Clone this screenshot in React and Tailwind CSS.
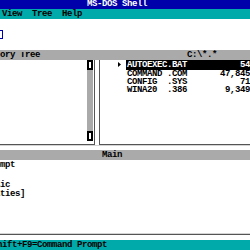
const files = [
  { name: "AUTOEXEC.BAT", size: "54" },
  { name: "COMMAND .COM", size: "47,845" },
  { name: "CONFIG  .SYS", size: "71" },
  { name: "WINA20  .386", size: "9,349" },
];

const programs = ["Command Prompt", "Editor", "MS-DOS QBasic", "[Disk Utilities]"];

function ScrollCap() {
  return (
    <div className="h-[10px] w-[6px] bg-black flex items-center justify-center">
      <div className="h-[6px] w-[2px] bg-white" />
    </div>
  );
}

export default function App() {
  return (
    <div className="w-[250px] h-[250px] overflow-hidden bg-white flex flex-col font-['Liberation_Mono',monospace] font-bold text-[9px] tracking-[-0.4px] leading-[7px] text-black whitespace-pre">
      {/* title + menu */}
      <div className="h-[9px] shrink-0 bg-[#0000aa] text-white flex items-center pl-[87px]">MS-DOS Shell</div>
      <div className="h-[10px] shrink-0 bg-[#00aaaa] flex items-center pl-[2px]">View  Tree  Help</div>

      {/* drive strip */}
      <div className="h-[31px] shrink-0 pt-[11px]">
        <div className="-ml-[3px] h-[9px] w-[6px] border border-[#0000aa]" />
      </div>

      {/* panel headers */}
      <div className="h-[10px] shrink-0 bg-[#aaaaaa] flex items-center overflow-hidden">
        <div className="w-[99px] shrink-0 overflow-hidden">
          <span className="-ml-[30px] inline-block">Directory Tree</span>
        </div>
        <div className="pl-[88px]">C:\*.*</div>
      </div>

      {/* tree + file list */}
      <div className="h-[85px] shrink-0 flex">
        <div className="w-[95px] shrink-0 border-r border-b border-[#555] flex justify-end">
          <div className="w-[6px] mr-[1px] mb-[3px] flex flex-col bg-[#aaaaaa]">
            <ScrollCap />
            <div className="flex-1" />
            <ScrollCap />
          </div>
        </div>
        <div className="w-[4px] shrink-0" />
        <div className="flex-1 border-l border-b border-[#555] flex">
          <div className="w-[26px] shrink-0 pl-[18px] pt-[2px]">
            <svg width="3" height="5" viewBox="0 0 3 5" className="block">
              <path d="M0 0 L3 2.5 L0 5 Z" fill="#000" />
            </svg>
          </div>
          <div className="flex-1 flex flex-col">
            {files.map((f, i) => (
              <div
                key={f.name}
                className={
                  i === 0
                    ? "h-[10px] bg-black text-white flex items-center justify-between pl-[1px]"
                    : "h-[8px] flex items-center justify-between pl-[1px]"
                }
              >
                <span>{f.name}</span>
                <span>{f.size}</span>
              </div>
            ))}
          </div>
        </div>
      </div>
      <div className="h-px shrink-0 bg-[#d4d4d4]" />
      <div className="h-[4px] shrink-0" />

      {/* main group */}
      <div className="h-[10px] shrink-0 bg-[#aaaaaa] flex items-center pl-[102px]">Main</div>
      <div className="h-[75px] shrink-0 flex flex-col border-b border-[#555] pt-px overflow-hidden">
        {programs.map((p) => (
          <div key={p} className="h-[9.67px] shrink-0 flex items-center">
            <span className="-ml-[55px]">{p}</span>
          </div>
        ))}
        <div className="flex-1" />
        <div className="h-px bg-[#d4d4d4]" />
      </div>
      <div className="h-[5px] shrink-0" />

      {/* status bar */}
      <div className="h-[10px] shrink-0 bg-[#00aaaa] flex items-center overflow-hidden">
        <span className="-ml-[8px]">Shift+F9=Command Prompt</span>
      </div>
    </div>
  );
}
